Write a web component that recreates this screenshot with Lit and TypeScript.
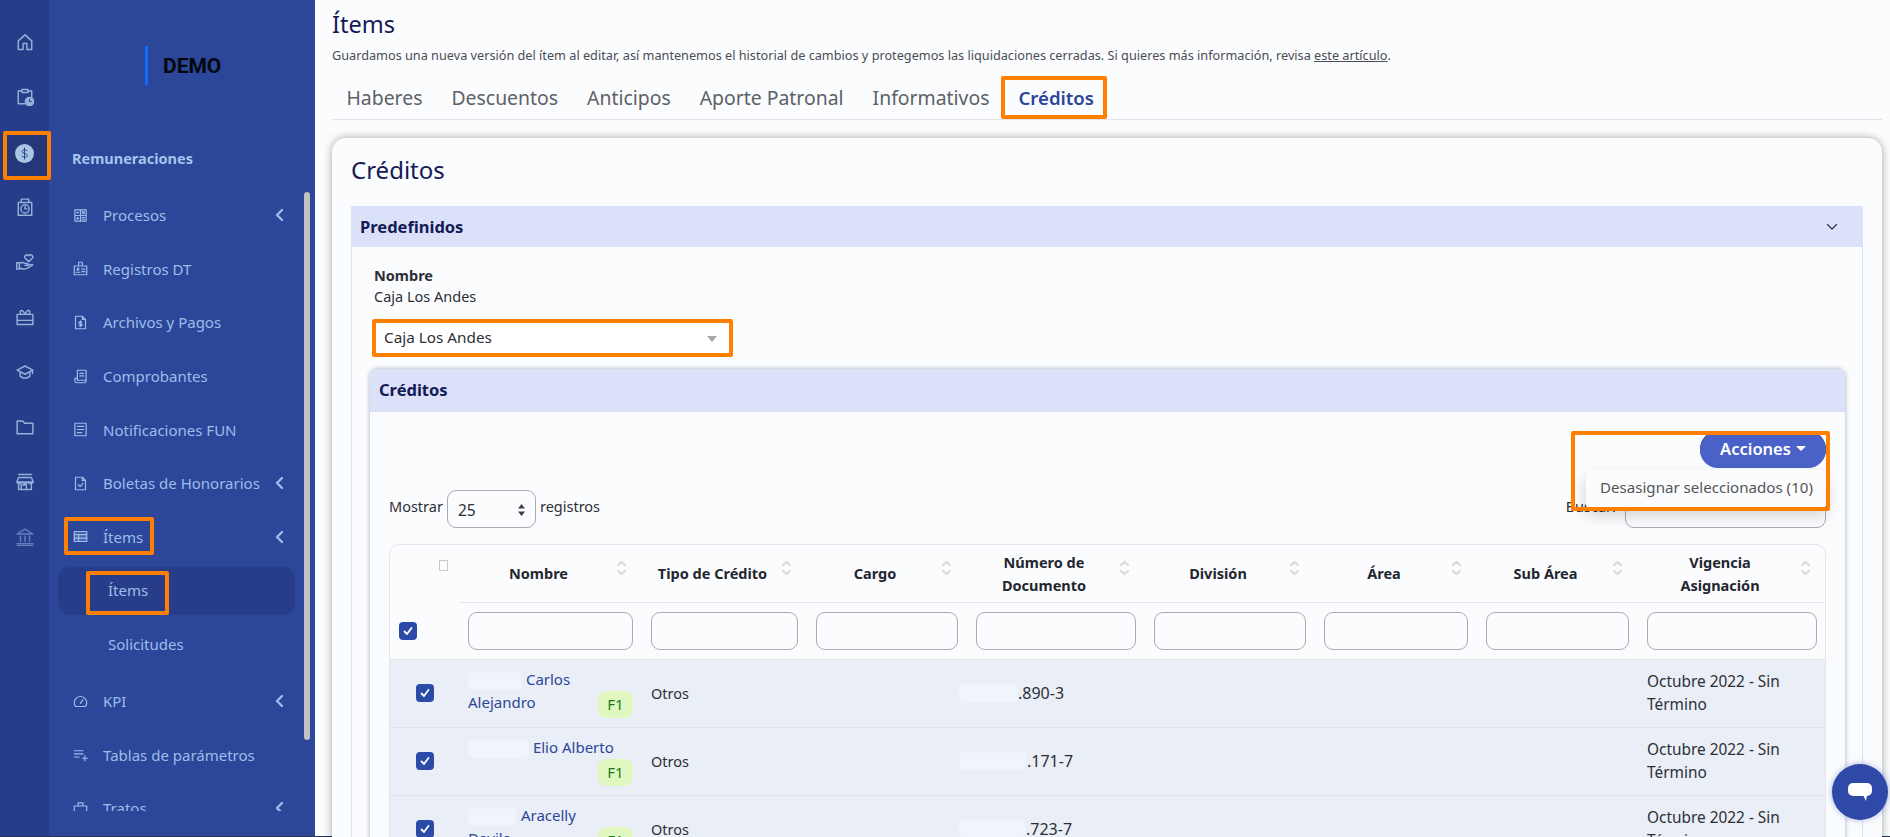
import { LitElement, html, css, svg } from 'lit';
import { customElement } from 'lit/decorators.js';

const ico = (size: number, body: unknown) => html`<svg width=${size} height=${size} viewBox="0 0 24 24" fill="none" stroke="currentColor" stroke-width="1.900" stroke-linecap="round" stroke-linejoin="round">${body}</svg>`;

const railIcons = [
  svg`<path d="M3 10.500 12 2.500l9 8V22h-6.500v-8h-5v8H3z"/>`,
  svg`<path d="M8 4H3v17h9M16 4h5v8M8 2h8v4H8z"/><circle cx="18" cy="18" r="5.500" fill="currentColor"/><path d="M18 15v3h2.500" stroke="#283d8a" stroke-width="1.300"/>`,
  svg`<circle cx="12" cy="12" r="12" fill="#a9c6e4" stroke="none"/><path d="M15.500 8.500c-1-1.400-6.500-2-6.500 1 0 3.200 6.500 1.800 6.500 5 0 3-5.500 2.400-6.800.800M12 5v14" stroke="#283d8a" stroke-width="1.200"/>`,
  svg`<path d="M3 6h18v17H3zM7 6V1.500h10V6"/><circle cx="12" cy="14.500" r="5.500"/><path d="M12 11.500v3h2.500"/>`,
  svg`<path d="M1 13h3.500v8.500H1zM4.500 14c3-2 5-2 7.500 0h3c1.500 0 1.500 2.500 0 2.500h-3M4.500 20c6 2.500 9 2 18-4-1.500-1.500-3.500-1-6.500 1"/><path d="M17 11.500l-4.700-4.500c-2.500-2.900 2.200-6.500 4.700-3.200 2.500-3.300 7.200.3 4.700 3.200z"/>`,
  svg`<path d="M1.500 8.500h21V22h-21zM1.500 16.500h21M7 8.500c-3-3-1-6 1.500-5 1.500.6 3.500 5 3.500 5s2-4.400 3.500-5C18 2.500 20 5.500 17 8.500"/>`,
  svg`<path d="M12 4 1.500 9.500 12 15l10.500-5.500zM5.500 12.500v5c4 3.500 9 3.500 13 0v-5M22 10v4"/>`,
  svg`<path d="M1.500 4h7.500l2.500 3h11v14H1.500z"/>`,
  svg`<path d="M3.500 2h17M3.500 6h17L23 12H1zM1 12c2 3 6 3 7.500 0 1.500 3 5.500 3 7 0 1.500 3 5.500 3 7.500 0M3.500 14v8h17v-8M7 22v-6h7v6"/>`,
  svg`<path d="M12 1.500 1.500 8h21zM1.500 21h21M1.500 23.500h21M6 11v7M12 11v7M18 11v7"/>`,
];

const menu = [
  { label: 'Procesos', arrow: true, icon: svg`<path d="M3 3h18v18H3zM3 12h18M12 3v18M6 7.500h3M15 6l3 3M18 6l-3 3M6 16.500h3M7.500 15v3M15 15.500h3M15 18h3"/>` },
  { label: 'Registros DT', icon: svg`<path d="M2 8h20v14H2zM9 8V2h6v6"/><circle cx="8" cy="13" r="1.500"/><path d="M5 18h6M14 13h5M14 17h5"/>` },
  { label: 'Archivos y Pagos', icon: svg`<path d="M4 2h11l5 5v15H4zM15 2v5h5M14 11h-3c-2 0-2 3 0 3h2c2 0 2 3 0 3h-3M12 9.500v9"/>` },
  { label: 'Comprobantes', icon: svg`<path d="M7 2h14v16H7zM7 18v-3H3v4a3 3 0 0 0 3 3h12a3 3 0 0 0 3-3v-1M11 7h6M11 11h6"/>` },
  { label: 'Notificaciones FUN', icon: svg`<path d="M3 2h18v20H3zM7 7h10M7 12h10M7 17h7"/>` },
  { label: 'Boletas de Honorarios', arrow: true, icon: svg`<path d="M4 2h11l5 5v15H4zM15 2v5h5M8.500 14l3 3 4.500-5"/>` },
  { label: 'Ítems', arrow: true, icon: svg`<path d="M2 4h20v16H2z" fill="currentColor" fill-opacity=".25"/><path d="M2 9h20M2 14.500h20M9 9v11"/>` },
  { label: 'Ítems', sub: true, active: true },
  { label: 'Solicitudes', sub: true },
  { label: 'KPI', arrow: true, gap: 3, icon: svg`<path d="M4 20a10 10 0 1 1 16 0zM12 15l4-6"/>` },
  { label: 'Tablas de parámetros', icon: svg`<path d="M2 6h14M2 11h14M2 16h8M15 18h8M19 14v8"/>` },
  { label: 'Tratos', arrow: true, icon: svg`<path d="M2 8h20v14H2zM8 8V3h8v5"/>` },
] as any[];

const tabs = ['Haberes', 'Descuentos', 'Anticipos', 'Aporte Patronal', 'Informativos', 'Créditos'];

const cols = [
  { label: 'Nombre', w: 183 },
  { label: 'Tipo de Crédito', w: 165 },
  { label: 'Cargo', w: 160 },
  { label: 'Número de\nDocumento', w: 178 },
  { label: 'División', w: 170 },
  { label: 'Área', w: 162 },
  { label: 'Sub Área', w: 161 },
  { label: 'Vigencia\nAsignación', w: 188 },
];

const rows = [
  { hide: 54, first: 'Carlos', second: 'Alejandro', numHide: 59, num: '.890-3' },
  { hide: 61, first: 'Elio Alberto', second: '', numHide: 68, num: '.171-7' },
  { hide: 49, first: 'Aracelly', second: 'Davila', numHide: 67, num: '.723-7' },
];

// orange marks drawn on top of the screenshot
const marks = [
  [3, 131, 48, 49],
  [64, 517, 90, 38],
  [86, 571, 83, 44],
  [1001, 76, 106, 43],
  [372, 319, 361, 38],
  [1571, 431, 259, 80],
];

@customElement('app-root')
export class AppRoot extends LitElement {
  static styles = css`
    :host {
      display: block;
      position: relative;
      width: 1890px;
      height: 837px;
      overflow: hidden;
      font-family: 'Noto Sans', Lato, sans-serif;
      font-size: 14.500px;
      color: #2c2f36;
      background: #fbfcfe;
    }
    * { box-sizing: border-box; }
    .app { display: flex; height: 837px; border-bottom: 1px solid #2a3558; }
    .rail { width: 49px; flex: none; background: #283d8a; padding-top: 14.500px; color: #94b1da; }
    .rail-item { height: 55px; display: flex; justify-content: center; align-items: center; }
    .rail-item.on { background: #243779; height: 48px; margin: 7.500px 0 -.500px; padding-top: 11.500px; align-items: flex-start; }
    .rail-item.dim { color: #647fbd; }
    .side { width: 266px; flex: none; background: #2c4699; position: relative; color: #9dbde9; }
    .logo { height: 132px; display: flex; align-items: flex-start; padding: 46px 0 0 96px; }
    .logo i { width: 3px; height: 39px; background: #0d6efd; margin-right: 15px; }
    .logo b { font: 700 21px/1 Roboto, sans-serif; color: #05070f; margin-top: 10px; }
    .side h4 { margin: 0 0 0 23px; font-size: 14.500px; font-weight: 700; line-height: 52px; color: #a6c4ec; }
    .menu { height: 627px; overflow: hidden; padding-top: 4.500px; }
    .mi { height: 53.600px; display: flex; align-items: center; padding-left: 24px; font-size: 15px; position: relative; white-space: nowrap; }
    .mi .ic { width: 30px; display: flex; }
    .mi .ar { position: absolute; left: 226px; top: 50%; margin-top: -7px; display: flex; }
    .mi.sub { padding-left: 59px; }
    .mi.active { background: #283d8a; border-radius: 12px; margin: 3px 20px 3px 9px; height: 48px; padding: 0 0 2px 50px; }
    .scroll { position: absolute; left: 255px; top: 192px; width: 6px; height: 548px; background: #c2c2c2; border-radius: 3px; }

    .main { flex: 1; min-width: 0; padding: 5px 8px 0 17px; }
    h1 { margin: 0 0 2px; font-size: 23.500px; font-weight: 400; line-height: 39px; color: #141a55; }
    .lead { margin: 0; font-size: 12.700px; line-height: 18px; color: #4a4d55; height: 18px; white-space: nowrap; }
    .lead u { color: #4a4d55; }
    .tabs { display: flex; margin-top: 12px; height: 44px; border-bottom: 1px solid #e2e4e8; }
    .tab { padding: 0 14.500px; font-size: 19.400px; line-height: 43px; color: #5d6168; }
    .tab.on { color: #2c4699; font-weight: 600; font-size: 18.600px; }

    .card { margin-top: 18px; height: 760px; background: #fbfcfe; border-radius: 14px; padding: 0 19px; box-shadow: 0 0 8px rgba(0, 0, 0, .35); }
    .card h2 { margin: 0; font-size: 24px; font-weight: 400; line-height: 64px; height: 68px; color: #141a55; }
    .panel { border: 1px solid #dae1f8; border-top: 0; }
    .phead { height: 41px; background: #dae1f8; display: flex; align-items: center; justify-content: space-between; padding: 0 24px 0 8px; font-size: 16.500px; font-weight: 700; color: #141a55; }
    .pbody { padding: 18px 17px 0 18px; }
    .field { margin-left: 4px; line-height: 21px; }
    .field b { display: block; font-weight: 700; }
    .sel { margin: 13px 0 12px 4px; width: 357px; height: 37px; display: flex; align-items: center; justify-content: space-between; padding: 0 14px 3px 10px; background: #fff; font-size: 15.300px; }
    .sel i { width: 0; height: 0; border: 5px solid transparent; border-top: 6px solid #a8a8a8; border-bottom: 0; margin-top: 3px; }

    .inner { border-radius: 8px 8px 0 0; box-shadow: 0 0 5px rgba(60, 70, 110, .45); height: 600px; }
    .ihead { height: 43px; background: #dae1f8; border-radius: 8px 8px 0 0; display: flex; align-items: center; padding: 0 0 2px 9px; font-size: 16.500px; font-weight: 700; color: #141a55; }
    .ibody { padding: 20px 19px 0; }
    .actions { display: flex; justify-content: flex-end; position: relative; height: 36px; }
    .btn { width: 126px; height: 36px; border-radius: 18px; background: #4a62c8; color: #fff; font-size: 16.500px; font-weight: 600; display: flex; align-items: center; justify-content: center; gap: 5px; padding-bottom: 3px; box-shadow: 0 -1px 0 #2f3a6e; }
    .btn i { width: 0; height: 0; border: 5px solid transparent; border-top: 5px solid #fff; border-bottom: 0; }
    .drop { position: absolute; right: 0; top: 38px; width: 240px; height: 37px; background: #fbfcfe; box-shadow: 0 8px 16px rgba(0, 0, 0, .18); border-radius: 3px; font-size: 15.100px; line-height: 35px; padding-left: 14px; color: #555; white-space: nowrap; }
    .tools { display: flex; align-items: flex-start; justify-content: space-between; margin-top: 22px; height: 38px; line-height: 33px; }
    .tools > div { display: flex; gap: 4px; }
    .len { width: 89px; height: 38px; border: 1px solid #a9abb0; border-radius: 9px; display: flex; align-items: center; justify-content: space-between; padding: 2px 9px 0 10px; font-size: 15.500px; }
    .search { width: 201px; height: 38px; border: 1px solid #a9abb0; border-radius: 9px; margin-left: 5px; }

    .wrap { margin-top: 16px; border: 1px solid #e4e6ea; border-bottom: 0; border-radius: 10px 10px 0 0; overflow: hidden; }
    table { width: 1436px; table-layout: fixed; border-collapse: separate; border-spacing: 0; }
    th { height: 58px; padding: 0 33px 0 9px; font-size: 14.500px; line-height: 23px; font-weight: 700; text-align: center; position: relative; border-bottom: 1px solid #e4e6ea; color: #23262e; white-space: pre-line; }
    th.blank { border-bottom: 0; padding: 0; }
    th.blank span { position: absolute; left: 49px; top: 15px; width: 9px; height: 11px; border: 1px solid #c9c9c9; }
    .sort { position: absolute; right: 15px; top: 15px; display: block; }
    .filter td { height: 57px; padding: 0 9px; border-bottom: 1px solid #e4e6ea; background: #fbfcfe; }
    .filter div { height: 38px; border: 1px solid #a9abb0; border-radius: 9px; }
    .check { width: 18px; height: 18px; border-radius: 4px; background: #2c4aa8; display: flex; align-items: center; justify-content: center; }
    tbody tr.row td { height: 68px; background: #eaeef6; border-bottom: 1px solid #dfe4ee; padding: 0 9px 2px; }
    .name { position: relative; height: 65px; color: #2c4699; line-height: 23px; padding-top: 8px; font-size: 15px; white-space: nowrap; }
    .hide { display: inline-block; height: 18px; background: #eff4fd; border-radius: 5px; filter: blur(1px); vertical-align: middle; }
    .badge { position: absolute; right: 0; bottom: 7px; width: 35px; height: 27px; background: #e0f8c0; color: #1c7a1c; border-radius: 8px; text-align: center; line-height: 27px; font-size: 15px; }
    .num { display: flex; align-items: center; font-size: 16px; }
    .vig { line-height: 23px; font-size: 15.400px; }
    .chat { position: absolute; left: 1832px; top: 764px; width: 56px; height: 56px; border-radius: 50%; background: #2f49a8; display: flex; align-items: center; justify-content: center; box-shadow: 0 0 6px rgba(47, 73, 168, .4); }
    .mark { position: absolute; border: 4px solid #ff7f00; border-radius: 2px; pointer-events: none; }
  `;

  private sort() {
    return html`<svg class="sort" width="11" height="16" viewBox="0 0 11 16" fill="none" stroke="#d9d9d9" stroke-width="2.200" stroke-linecap="round" stroke-linejoin="round"><path d="M2 5l3.500-3 3.500 3M2 11l3.500 3 3.500-3"/></svg>`;
  }

  private check() {
    return html`<span class="check"><svg width="12" height="12" viewBox="0 0 12 12" fill="none" stroke="#fff" stroke-width="1.800" stroke-linecap="round" stroke-linejoin="round"><path d="M2.500 6.500 5 9l4.500-6"/></svg></span>`;
  }

  private sidebar() {
    return html`
      <nav class="rail">
        ${railIcons.map((b, i) => html`<div class="rail-item ${i === 2 ? 'on' : ''} ${i === 9 ? 'dim' : ''}">${ico(i === 2 ? 19 : 18, b)}</div>`)}
      </nav>
      <aside class="side">
        <div class="logo"><i></i><b>DEMO</b></div>
        <h4>Remuneraciones</h4>
        <div class="menu">
          ${menu.map((m) => html`
            <div class="mi ${m.sub ? 'sub' : ''} ${m.active ? 'active' : ''}" style=${m.gap ? `margin-top:${m.gap}px` : ''}>
              ${m.icon ? html`<span class="ic">${ico(15, m.icon)}</span>` : ''}
              <span>${m.label}</span>
              ${m.arrow ? html`<span class="ar"><svg width="9" height="14" viewBox="0 0 9 14" fill="none" stroke="currentColor" stroke-width="2.400" stroke-linecap="round" stroke-linejoin="round"><path d="M7 2 2 7l5 5"/></svg></span>` : ''}
            </div>`)}
        </div>
        <div class="scroll"></div>
      </aside>
    `;
  }

  private table() {
    return html`
      <div class="wrap">
        <table>
          <colgroup><col style="width:69px" />${cols.map((c) => html`<col style="width:${c.w}px" />`)}</colgroup>
          <thead>
            <tr>
              <th class="blank"><span></span></th>
              ${cols.map((c) => html`<th>${c.label}${this.sort()}</th>`)}
            </tr>
          </thead>
          <tbody>
            <tr class="filter">
              <td>${this.check()}</td>
              ${cols.map(() => html`<td><div></div></td>`)}
            </tr>
            ${rows.map((r) => html`
              <tr class="row">
                <td style="padding-left:26px">${this.check()}</td>
                <td>
                  <div class="name">
                    <span class="hide" style="width:${r.hide}px"></span> ${r.first}<br />${r.second}
                    <span class="badge">F1</span>
                  </div>
                </td>
                <td>Otros</td>
                <td></td>
                <td><div class="num" style="margin-left:-17px"><span class="hide" style="width:${r.numHide}px"></span>${r.num}</div></td>
                <td></td>
                <td></td>
                <td></td>
                <td><div class="vig">Octubre 2022 - Sin Término</div></td>
              </tr>`)}
          </tbody>
        </table>
      </div>
    `;
  }

  render() {
    return html`
      <div class="app">
        ${this.sidebar()}
        <main class="main">
          <h1>Ítems</h1>
          <p class="lead">Guardamos una nueva versión del ítem al editar, así mantenemos el historial de cambios y protegemos las liquidaciones cerradas. Si quieres más información, revisa <u>este artículo</u>.</p>
          <div class="tabs">${tabs.map((t) => html`<div class="tab ${t === 'Créditos' ? 'on' : ''}">${t}</div>`)}</div>
          <section class="card">
            <h2>Créditos</h2>
            <div class="panel">
              <div class="phead">Predefinidos
                <svg width="12" height="8" viewBox="0 0 12 8" fill="none" stroke="#30384f" stroke-width="1.300" stroke-linecap="round" stroke-linejoin="round"><path d="M1.500 1.500 6 6l4.500-4.500"/></svg>
              </div>
              <div class="pbody">
                <div class="field"><b>Nombre</b>Caja Los Andes</div>
                <div class="sel">Caja Los Andes<i></i></div>
                <div class="inner">
                  <div class="ihead">Créditos</div>
                  <div class="ibody">
                    <div class="actions">
                      <div class="btn">Acciones<i></i></div>
                      <div class="drop">Desasignar seleccionados (10)</div>
                    </div>
                    <div class="tools">
                      <div>Mostrar
                        <span class="len">25
                          <svg width="9" height="14" viewBox="0 0 9 14" fill="#3c3f46"><path d="M4.500 1 8 5.500H1zM4.500 13 1 8.500h7z"/></svg>
                        </span>
                        registros</div>
                      <div>Buscar:<span class="search"></span></div>
                    </div>
                    ${this.table()}
                  </div>
                </div>
              </div>
            </div>
          </section>
        </main>
      </div>
      <div class="chat">
        <svg width="26" height="20" viewBox="0 0 26 20" fill="#fff"><rect x="1" y="1" width="24" height="13" rx="5"/><path d="M16 13h4l-1 6z"/></svg>
      </div>
      ${marks.map(([x, y, w, h]) => html`<div class="mark" style="left:${x}px;top:${y}px;width:${w}px;height:${h}px"></div>`)}
    `;
  }
}
